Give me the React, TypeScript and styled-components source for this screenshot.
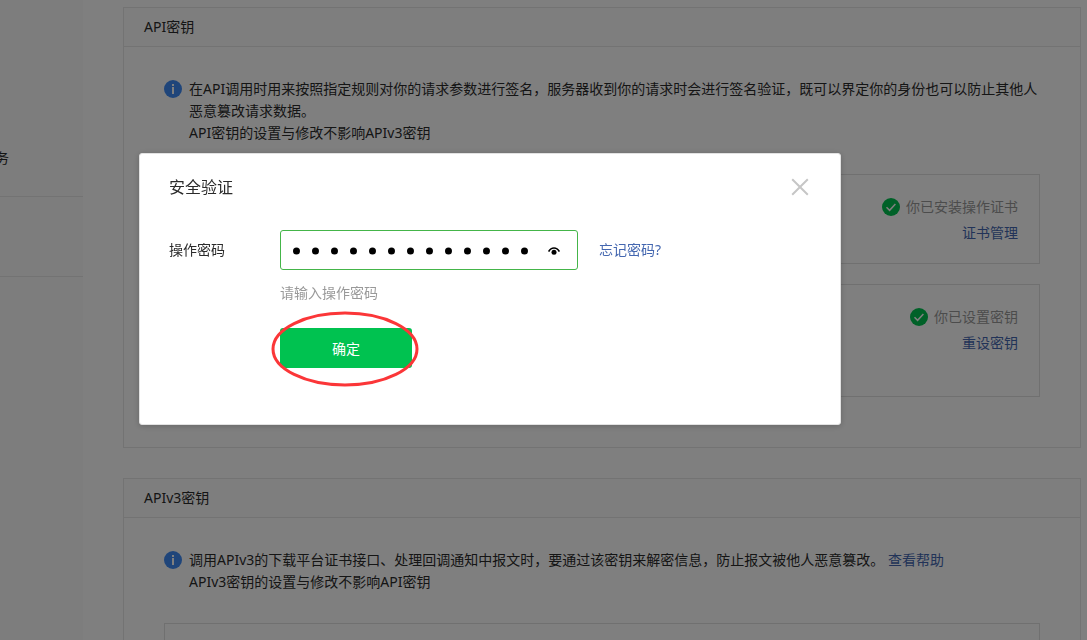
import React from "react";
import styled, { createGlobalStyle } from "styled-components";

const GlobalStyle = createGlobalStyle`
  *, *::before, *::after { box-sizing: border-box; }
  html, body { margin: 0; height: 100%; }
  body {
    background: #fff;
    color: #2b2b2b;
    font-family: "Noto Sans", "Noto Sans CJK SC", sans-serif;
    font-size: 14px;
    line-height: 22px;
    overflow: hidden;
  }
  #root { height: 100%; }
  p, h1, h2 { margin: 0; font-weight: 400; }
  a { color: #4467b0; text-decoration: none; }
  button, input { font: inherit; }
`;

const Page = styled.div`
  display: flex;
  height: 100%;
  overflow: hidden;
`;

const Sidebar = styled.nav`
  flex: 0 0 83px;
  background: #fafafa;
`;

const SidebarGroup = styled.div<{ $height: number }>`
  display: flex;
  align-items: flex-end;
  height: ${(p) => p.$height}px;
  padding-bottom: 27px;
  border-bottom: 1px solid #e7e7e7;
`;

const SidebarLink = styled.a`
  display: flex;
  justify-content: flex-end;
  width: 9px;
  overflow: hidden;
  color: #2b2b2b;
`;

const Main = styled.main`
  flex: 1;
  display: flex;
  flex-direction: column;
  gap: 30px;
  padding: 7px 6px 0 40px;
`;

const Panel = styled.section`
  flex: none;
  border: 1px solid #e7e7e7;
`;

const PanelHeader = styled.header`
  height: 39px;
  padding: 8px 20px;
  background: #fcfcfc;
  border-bottom: 1px solid #e7e7e7;
`;

const PanelTitle = styled.h2`
  font-size: 14px;
  line-height: 22px;
`;

const PanelBody = styled.div`
  padding: 31px 40px 50px;
`;

const Notice = styled.div`
  display: flex;
  gap: 7px;
  margin-bottom: 30px;
`;

const NoticeIcon = styled.svg`
  flex: none;
  width: 18px;
  height: 18px;
  margin-top: 2px;
`;

const Cards = styled.div`
  display: flex;
  flex-direction: column;
  gap: 20px;
`;

const Card = styled.div<{ $height: number }>`
  display: flex;
  flex-direction: column;
  align-items: flex-end;
  gap: 4px;
  height: ${(p) => p.$height}px;
  padding: 21px 21px 0;
  border: 1px solid #e0e0e0;
`;

const Status = styled.div`
  display: flex;
  align-items: center;
  gap: 6px;
  color: #999;
`;

const Overlay = styled.div`
  position: fixed;
  inset: 0;
  padding: 153px 0 0 139px;
  background: rgba(0, 0, 0, 0.5);
`;

const Dialog = styled.div`
  width: 702px;
  max-width: 100%;
  height: 272px;
  padding: 21px 29px;
  background: #fff;
  border: 1px solid #e2e2e2;
  border-radius: 3px;
  box-shadow: 0 1px 6px rgba(0, 0, 0, 0.2);
`;

const DialogHeader = styled.div`
  display: flex;
  justify-content: space-between;
  align-items: center;
  height: 24px;
  margin-bottom: 31px;
`;

const DialogTitle = styled.h1`
  font-size: 16px;
  line-height: 24px;
`;

const CloseButton = styled.button`
  display: flex;
  padding: 2px;
  border: 0;
  background: none;
`;

const Form = styled.form`
  display: grid;
  grid-template-columns: 111px 298px 1fr;
  align-items: center;
`;

const PasswordBox = styled.div`
  display: flex;
  align-items: center;
  height: 40px;
  padding: 0 17px 0 6px;
  border: 1px solid #44b549;
  border-radius: 3px;
`;

const PasswordInput = styled.input`
  flex: 1;
  min-width: 0;
  height: 36px;
  padding: 0;
  border: 0;
  outline: 0;
  background: none;
  color: #000;
  font-family: "Noto Sans CJK SC", sans-serif;
  font-size: 19px;
  -webkit-text-stroke: 3px #000;
`;

const RevealButton = styled.button`
  display: flex;
  padding: 2px 0 0;
  border: 0;
  background: none;
`;

const ForgotLink = styled.a`
  margin-left: 21px;
`;

const Hint = styled.p`
  grid-column: 2 / -1;
  margin: 12px 0 24px;
  color: #999;
`;

const SubmitArea = styled.div`
  grid-column: 2;
  position: relative;
  width: 132px;
  height: 40px;
`;

const SubmitButton = styled.button`
  width: 100%;
  height: 100%;
  padding: 2px 0 0;
  border: 0;
  border-radius: 3px;
  background: #00c250;
  color: #fff;
`;

const Highlight = styled.svg`
  position: absolute;
  top: -17px;
  left: -9px;
  width: 148px;
  height: 76px;
  pointer-events: none;
`;

function InfoIcon() {
  return (
    <NoticeIcon viewBox="0 0 18 18" aria-hidden="true">
      <circle cx="9" cy="9" r="9" fill="#3f8bf5" />
      <rect x="8" y="4" width="2" height="2" fill="#fff" />
      <rect x="8" y="7" width="2" height="7" fill="#fff" />
    </NoticeIcon>
  );
}

function CheckIcon() {
  return (
    <svg width="18" height="18" viewBox="0 0 18 18" aria-hidden="true">
      <circle cx="9" cy="9" r="9" fill="#00c250" />
      <path d="M4.500 9.200 7.600 12.300 13.400 6" fill="none" stroke="#fff" strokeWidth="1.5" />
    </svg>
  );
}

function CloseIcon() {
  return (
    <svg width="18" height="18" viewBox="0 0 18 18" aria-hidden="true">
      <path d="M1.200 1.200 16.800 16.800M16.800 1.200 1.200 16.800" stroke="#c6c6c6" strokeWidth="2" />
    </svg>
  );
}

function EyeIcon() {
  return (
    <svg width="12" height="8" viewBox="0 0 12 8" aria-hidden="true">
      <path d="M.600 4.600C2 2 3.800 1 6 1s4 1 5.400 3.600" fill="none" stroke="#000" strokeWidth="1.700" />
      <circle cx="6" cy="5.300" r="2.500" />
    </svg>
  );
}

export default function App() {
  return (
    <>
      <GlobalStyle />
      <Page>
        <Sidebar>
          <SidebarGroup $height={197}>
            <SidebarLink href="#">务</SidebarLink>
          </SidebarGroup>
          <SidebarGroup $height={80} />
        </Sidebar>
        <Main>
          <Panel>
            <PanelHeader>
              <PanelTitle>API密钥</PanelTitle>
            </PanelHeader>
            <PanelBody>
              <Notice>
                <InfoIcon />
                <div>
                  <p>
                    在API调用时用来按照指定规则对你的请求参数进行签名，服务器收到你的请求时会进行签名验证，既可以界定你的身份也可以防止其他人恶意篡改请求数据。
                  </p>
                  <p>API密钥的设置与修改不影响APIv3密钥</p>
                </div>
              </Notice>
              <Cards>
                <Card $height={90}>
                  <Status>
                    <CheckIcon />
                    你已安装操作证书
                  </Status>
                  <a href="#">证书管理</a>
                </Card>
                <Card $height={113}>
                  <Status>
                    <CheckIcon />
                    你已设置密钥
                  </Status>
                  <a href="#">重设密钥</a>
                </Card>
              </Cards>
            </PanelBody>
          </Panel>
          <Panel>
            <PanelHeader>
              <PanelTitle>APIv3密钥</PanelTitle>
            </PanelHeader>
            <PanelBody>
              <Notice>
                <InfoIcon />
                <div>
                  <p>
                    调用APIv3的下载平台证书接口、处理回调通知中报文时，要通过该密钥来解密信息，防止报文被他人恶意篡改。{" "}
                    <a href="#">查看帮助</a>
                  </p>
                  <p>APIv3密钥的设置与修改不影响API密钥</p>
                </div>
              </Notice>
              <Cards>
                <Card $height={113} />
              </Cards>
            </PanelBody>
          </Panel>
        </Main>
      </Page>
      <Overlay>
        <Dialog role="dialog" aria-modal="true" aria-labelledby="dialog-title">
          <DialogHeader>
            <DialogTitle id="dialog-title">安全验证</DialogTitle>
            <CloseButton type="button" aria-label="关闭">
              <CloseIcon />
            </CloseButton>
          </DialogHeader>
          <Form onSubmit={(e) => e.preventDefault()}>
            <label htmlFor="password">操作密码</label>
            <PasswordBox>
              <PasswordInput id="password" type="password" defaultValue="1234567890123" />
              <RevealButton type="button" aria-label="显示密码">
                <EyeIcon />
              </RevealButton>
            </PasswordBox>
            <ForgotLink href="#">忘记密码?</ForgotLink>
            <Hint>请输入操作密码</Hint>
            <SubmitArea>
              <SubmitButton type="submit">确定</SubmitButton>
              <Highlight viewBox="0 0 148 76" aria-hidden="true">
                <ellipse cx="74" cy="38" rx="72" ry="36" fill="none" stroke="#fb3638" strokeWidth="3" />
              </Highlight>
            </SubmitArea>
          </Form>
        </Dialog>
      </Overlay>
    </>
  );
}
